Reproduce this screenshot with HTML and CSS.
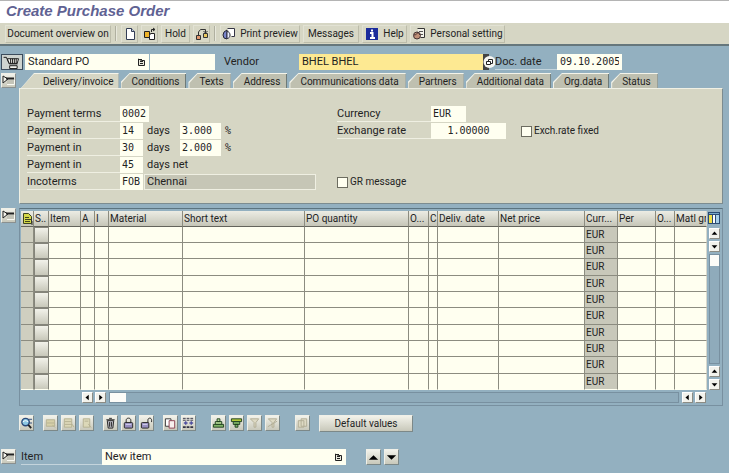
FILE: index.html
```html
<!DOCTYPE html>
<html lang="en">
<head>
<meta charset="utf-8">
<title>Create Purchase Order</title>
<link rel="stylesheet" href="styles.css">
</head>
<body>
<svg class="defs" aria-hidden="true">
  <symbol id="i-tray" viewBox="0 0 13 13"><path d="M1 2v7l5-4z" fill="#f4f4ec" stroke="#222"/><path d="M4 4.500h8" stroke="#222" stroke-width="2"/><path d="M5 6h7v4H5z" fill="#c4c4b8"/><path d="M5 10.500h7.500V6" stroke="#fafaf4" fill="none"/></symbol>
  <symbol id="i-list" viewBox="0 0 9 9"><path d="M1.500 1v6.500h6v-5h-3z" fill="#e8e8dc" stroke="#222"/><path d="M3 3.500h3M3 5.500h3" stroke="#222"/><path d="M1 1.500h4" stroke="#222"/></symbol>
  <symbol id="i-up" viewBox="0 0 11 11"><path d="M2 7l3.500-4L9 7z"/></symbol>
  <symbol id="i-down" viewBox="0 0 11 11"><path d="M2 4l3.500 4L9 4z"/></symbol>
  <symbol id="i-left" viewBox="0 0 11 11"><path d="M7 2L3 5.500 7 9z"/></symbol>
  <symbol id="i-right" viewBox="0 0 11 11"><path d="M4 2l4 3.500L4 9z"/></symbol>
</svg>

<header class="title"><h1>Create Purchase Order</h1></header>

<nav class="toolbar" aria-label="Application toolbar">
  <button class="tool doc">Document overview on</button>
  <span class="sep"></span>
  <button class="tool icon" aria-label="Create"><svg viewBox="0 0 14 14"><path d="M3.500 1.500h5l3 3v8h-8z" fill="#fff" stroke="#333d55"/><path d="M8.500 1.500v3h3" fill="#c8d4e4" stroke="#333d55"/></svg></button>
  <button class="tool icon" aria-label="Other purchase order"><svg viewBox="0 0 14 14"><path d="M1.500 4.500h5v6h-5z" fill="#f0b428" stroke="#222"/><path d="M7.500 6.500h4v6h-5v-4z" fill="#fff" stroke="#222"/><path d="M8.500 5V2.500h3M10 1l2 1.500L10 4" fill="none" stroke="#222"/></svg></button>
  <button class="tool hold">Hold</button>
  <button class="tool icon" aria-label="Check"><svg viewBox="0 0 14 14"><path d="M1.500 8.500h4v4h-4z" fill="#e09870" stroke="#333"/><path d="M8.500 6.500h4v4h-4z" fill="#e8c860" stroke="#333"/><path d="M3.500 8V5l2-2.500h5V6M8.500 4l2 2 2-2" fill="none" stroke="#333"/></svg></button>
  <span class="sep"></span>
  <button class="tool print"><svg viewBox="0 0 14 14"><path d="M5.500 1.500h7v8h-3" fill="#fff" stroke="#334"/><path d="M2 5l3-2v9l-3-1-1-3z" fill="#7a86cc" stroke="#223"/><path d="M5 4.500c4 0 4 7 0 7z" fill="#e8ecff" stroke="#334"/></svg>Print preview</button>
  <button class="tool msg">Messages</button>
  <button class="tool help"><svg viewBox="0 0 14 14"><rect x="1" y="1" width="12" height="12" fill="#1c2c9c"/><path d="M7 2.500v2M5 6h2.500v5M5 11h5" fill="none" stroke="#fff" stroke-width="2"/></svg>Help</button>
  <button class="tool personal"><svg viewBox="0 0 14 14"><path d="M5.500 1.500h7v9h-4" fill="#f4f4ec" stroke="#333"/><path d="M7 4.500h4M8 7.500h3" stroke="#555"/><circle cx="5" cy="8.500" r="3.500" fill="#c09078" stroke="#433"/><path d="M2 8c2 0 3-1 4-3l2 3" fill="none" stroke="#433"/></svg>Personal setting</button>
</nav>

<main>
  <form class="head">
    <button type="button" class="cart" aria-label="Shopping cart"><svg viewBox="0 0 20 15"><path d="M1 2.500h3l3 7h9" fill="none" stroke="#111"/><path d="M5 4h12l-1.500 5H7z" fill="#f4f4ee" stroke="#111"/><path d="M8.500 4v5M10.500 4v5M12.500 4v5M14.500 4v5" stroke="#111"/><path d="M7.500 11.500h8v3h-8z" fill="#f4f4ee" stroke="#111"/></svg></button>
    <span class="pick type"><select aria-label="Order type"><option>Standard PO</option></select><svg><use href="#i-list"/></svg></span>
    <input class="number" aria-label="Order number">
    <label class="vendor-label" for="vendor">Vendor</label>
    <input class="vendor" id="vendor" value="BHEL BHEL">
    <button type="button" class="match" aria-label="Search vendor"><svg viewBox="0 0 12 16"><path d="M0 0h6v16H0z" fill="#444"/><circle cx="6.500" cy="8" r="6" fill="#f6f6f2"/><path d="M5.500 5.500h4v4h-4z" fill="#fff" stroke="#222"/><path d="M3.500 7.500h4v3h-4z" fill="#fff" stroke="#222"/></svg></button>
    <label class="date-label" for="date">Doc. date</label>
    <input class="mono date" id="date" value="09.10.2005">
  </form>

  <section class="block">
    <button class="tray" aria-label="Collapse header"><svg><use href="#i-tray"/></svg></button>
    <div class="tabbed">
      <div class="tabs" role="tablist">
        <button class="tab active" role="tab" aria-selected="true"><span>Delivery/invoice</span></button>
        <button class="tab" role="tab"><span>Conditions</span></button>
        <button class="tab" role="tab"><span>Texts</span></button>
        <button class="tab" role="tab"><span>Address</span></button>
        <button class="tab" role="tab"><span>Communications data</span></button>
        <button class="tab" role="tab"><span>Partners</span></button>
        <button class="tab" role="tab"><span>Additional data</span></button>
        <button class="tab" role="tab"><span>Org.data</span></button>
        <button class="tab" role="tab"><span>Status</span></button>
      </div>
      <form class="panel">
        <div class="fields left">
          <div class="row"><label class="name" for="terms">Payment terms</label><input class="mono w4" id="terms" value="0002"></div>
          <div class="row"><label class="name" for="d1">Payment in</label><input class="mono w2" id="d1" value="14"><label class="unit" for="p1">days</label><input class="mono w5" id="p1" value="3.000"><span class="mono">%</span></div>
          <div class="row"><label class="name" for="d2">Payment in</label><input class="mono w2" id="d2" value="30"><label class="unit" for="p2">days</label><input class="mono w5" id="p2" value="2.000"><span class="mono">%</span></div>
          <div class="row"><label class="name" for="d3">Payment in</label><input class="mono w2" id="d3" value="45"><span class="unit">days net</span></div>
          <div class="row"><label class="name" for="inco">Incoterms</label><input class="mono w2" id="inco" value="FOB"><input class="place" aria-label="Incoterms place" value="Chennai" readonly></div>
        </div>
        <div class="fields right">
          <div class="row"><label class="name" for="cur">Currency</label><input class="mono w6" id="cur" value="EUR"></div>
          <div class="row"><label class="name" for="rate">Exchange rate</label><input class="mono rate" id="rate" value="1.00000"><label class="check fixed"><input type="checkbox">Exch.rate fixed</label></div>
          <div class="row"></div>
          <div class="row"></div>
          <div class="row"><label class="check"><input type="checkbox">GR message</label></div>
        </div>
      </form>
    </div>
  </section>

  <section class="block items">
    <button class="tray" aria-label="Collapse items"><svg><use href="#i-tray"/></svg></button>
    <div class="frame">
      <div class="body">
        <table>
          <colgroup><col class="c-mark"><col class="c-s"><col class="c-item"><col class="c-flag"><col class="c-flag"><col class="c-mat"><col class="c-text"><col class="c-qty"><col class="c-o"><col class="c-c"><col class="c-date"><col><col class="c-cur"><col class="c-per"><col class="c-ou"><col class="c-grp"></colgroup>
          <thead><tr><th><svg class="detail" viewBox="0 0 11 13"><path d="M1.500 1.500h5l3 3v7h-8z" fill="#d4d848" stroke="#3c4420"/><path d="M3 5.500h4M3 7.500h5M3 9.500h5" stroke="#3c4420"/><path d="M8 7l2 2v4" stroke="#333" fill="none"/></svg></th><th>S..</th><th>Item</th><th>A</th><th>I</th><th>Material</th><th>Short text</th><th>PO quantity</th><th>O...</th><th>C</th><th>Deliv. date</th><th>Net price</th><th>Curr...</th><th>Per</th><th>O...</th><th>Matl gr</th></tr></thead>
          <tbody>
            <tr><td></td><td></td><td></td><td></td><td></td><td></td><td></td><td></td><td></td><td></td><td></td><td></td><td>EUR</td><td></td><td></td><td></td></tr>
            <tr><td></td><td></td><td></td><td></td><td></td><td></td><td></td><td></td><td></td><td></td><td></td><td></td><td>EUR</td><td></td><td></td><td></td></tr>
            <tr><td></td><td></td><td></td><td></td><td></td><td></td><td></td><td></td><td></td><td></td><td></td><td></td><td>EUR</td><td></td><td></td><td></td></tr>
            <tr><td></td><td></td><td></td><td></td><td></td><td></td><td></td><td></td><td></td><td></td><td></td><td></td><td>EUR</td><td></td><td></td><td></td></tr>
            <tr><td></td><td></td><td></td><td></td><td></td><td></td><td></td><td></td><td></td><td></td><td></td><td></td><td>EUR</td><td></td><td></td><td></td></tr>
            <tr><td></td><td></td><td></td><td></td><td></td><td></td><td></td><td></td><td></td><td></td><td></td><td></td><td>EUR</td><td></td><td></td><td></td></tr>
            <tr><td></td><td></td><td></td><td></td><td></td><td></td><td></td><td></td><td></td><td></td><td></td><td></td><td>EUR</td><td></td><td></td><td></td></tr>
            <tr><td></td><td></td><td></td><td></td><td></td><td></td><td></td><td></td><td></td><td></td><td></td><td></td><td>EUR</td><td></td><td></td><td></td></tr>
            <tr><td></td><td></td><td></td><td></td><td></td><td></td><td></td><td></td><td></td><td></td><td></td><td></td><td>EUR</td><td></td><td></td><td></td></tr>
            <tr><td></td><td></td><td></td><td></td><td></td><td></td><td></td><td></td><td></td><td></td><td></td><td></td><td>EUR</td><td></td><td></td><td></td></tr>
          </tbody>
        </table>
        <div class="vscroll">
          <button class="config" aria-label="Table settings"><svg viewBox="0 0 14 14"><rect x="1" y="1" width="12" height="12" fill="#2c4c74"/><rect x="2" y="4" width="3" height="8" fill="#f0e048"/><rect x="6" y="4" width="2" height="8" fill="#fff"/><rect x="9" y="4" width="3" height="8" fill="#a8d0e8"/><path d="M2 2.500h10" stroke="#78a8c8"/></svg></button>
          <button class="arrow" aria-label="Scroll up"><svg><use href="#i-up"/></svg></button>
          <button class="arrow" aria-label="Scroll down"><svg><use href="#i-down"/></svg></button>
          <span class="track"><span class="thumb"></span></span>
          <button class="arrow" aria-label="Page up"><svg><use href="#i-up"/></svg></button>
          <button class="arrow" aria-label="Page down"><svg><use href="#i-down"/></svg></button>
        </div>
      </div>
      <div class="hscroll">
        <button class="arrow" aria-label="Scroll left"><svg><use href="#i-left"/></svg></button>
        <button class="arrow" aria-label="Scroll right"><svg><use href="#i-right"/></svg></button>
        <span class="track"><span class="thumb"></span></span>
        <button class="arrow" aria-label="Page left"><svg><use href="#i-left"/></svg></button>
        <button class="arrow" aria-label="Page right"><svg><use href="#i-right"/></svg></button>
      </div>
    </div>
  </section>

  <div class="actions">
    <div class="group"><button class="act" aria-label="Details"><svg viewBox="0 0 14 14"><circle cx="6" cy="6" r="4" fill="#8cc8e4" stroke="#2a4878" stroke-width="1.500"/><path d="M9 9l3 3.500" stroke="#222" stroke-width="2"/><path d="M3 6c2-2 4-2 6 0" stroke="#fff" fill="none"/><path d="M9 3h4M9 7h4" stroke="#2a4878"/></svg></button></div>
    <div class="group">
      <button class="act" disabled aria-label="Insert item"><svg viewBox="0 0 14 14"><path d="M2.500 3.500h9v7h-9zM3 7h8M9 9l3 3" fill="#d6d0a8" stroke="#b4b092"/></svg></button>
      <button class="act" disabled aria-label="Append item"><svg viewBox="0 0 14 14"><path d="M2.500 2.500h8v9h-8zM3 5.500h7M3 8.500h8l2 3" fill="#dcd8b8" stroke="#b4b092"/></svg></button>
      <button class="act" disabled aria-label="Copy item"><svg viewBox="0 0 14 14"><path d="M3.500 2.500h7v9h-7zM5 5h4M9 8l3 4" fill="#dcd8b8" stroke="#b4b092"/></svg></button>
    </div>
    <div class="group">
      <button class="act" aria-label="Delete"><svg viewBox="0 0 14 14"><path d="M3.500 4.500h7l-1 8h-5z" fill="#b8b8c0" stroke="#222"/><path d="M2.500 3.500h9M5.500 2h3M6 6v5M8 6v5" stroke="#222"/></svg></button>
      <button class="act" aria-label="Lock"><svg viewBox="0 0 14 14"><path d="M4.500 7V4c0-3 5-3 5 0v3" fill="none" stroke="#222"/><rect x="2.500" y="6.500" width="9" height="6" rx="1" fill="#9890c0" stroke="#222"/><path d="M4 8.500h6" stroke="#d8d4f0"/></svg></button>
      <button class="act" aria-label="Unlock"><svg viewBox="0 0 14 14"><path d="M8.500 7V4c0-3 4-3 4 0v2" fill="none" stroke="#222"/><rect x="1.500" y="6.500" width="8" height="6" rx="1" fill="#9890c0" stroke="#222"/><path d="M3 8.500h5" stroke="#d8d4f0"/></svg></button>
    </div>
    <div class="group far">
      <button class="act" aria-label="Duplicate"><svg viewBox="0 0 14 14"><path d="M1.500 2.500h6v8h-6z" fill="#fff" stroke="#333"/><path d="M5.500 4.500h6v8h-6z" fill="#f8f0ee" stroke="#8c4050"/></svg></button>
      <button class="act" aria-label="Fast change"><svg viewBox="0 0 14 14"><path d="M1 2h12M1 4h12" stroke="#334" stroke-dasharray="3 1"/><path d="M4 5v4M10 5v4M2 7h4M8 7h4" stroke="#5050a0" stroke-width="1.500"/><path d="M1 11.500h12" stroke="#334" stroke-width="2" stroke-dasharray="3 1"/></svg></button>
    </div>
    <div class="group far">
      <button class="act" aria-label="Sort ascending"><svg viewBox="0 0 14 14"><path d="M5.500 2.500h3v3h-3zM3.500 5.500h7v3h-7z" fill="#b8dc98" stroke="#1c3c1c"/><path d="M1.500 8.500h11v3h-11z" fill="#80b468" stroke="#1c3c1c"/></svg></button>
      <button class="act" aria-label="Sort descending"><svg viewBox="0 0 14 14"><path d="M1.500 2.500h11v3h-11z" fill="#b0c838" stroke="#1c3c1c"/><path d="M3.500 5.500h7v3h-7zM5.500 8.500h3v3h-3z" fill="#80b468" stroke="#1c3c1c"/></svg></button>
      <button class="act" disabled aria-label="Set filter"><svg viewBox="0 0 14 14"><path d="M2.500 2.500h9l-3 4v5h-2v-5z" fill="#dedac4" stroke="#b0ac94"/></svg></button>
      <button class="act" disabled aria-label="Delete filter"><svg viewBox="0 0 14 14"><path d="M2.500 2.500h9l-3 4v5h-2v-5zM2 11l10-6" fill="#dedac4" stroke="#b0ac94"/></svg></button>
    </div>
    <div class="group"><button class="act" disabled aria-label="Paste"><svg viewBox="0 0 14 14"><path d="M2.500 4.500h6v7h-6zM5.500 2.500h6v8h-6z" fill="#dedac4" stroke="#b0ac94"/></svg></button></div>
    <button class="default">Default values</button>
  </div>

  <form class="item-bar">
    <button type="button" class="tray" aria-label="Expand item detail"><svg><use href="#i-tray"/></svg></button>
    <label class="item-label" for="item">Item</label>
    <span class="pick item"><select id="item"><option>New item</option></select><svg><use href="#i-list"/></svg></span>
    <button type="button" class="act" aria-label="Previous item"><svg viewBox="0 0 14 14"><path d="M2 10l5-5 5 5z"/></svg></button>
    <button type="button" class="act" aria-label="Next item"><svg viewBox="0 0 14 14"><path d="M2 5l5 5 5-5z"/></svg></button>
  </form>
</main>
</body>
</html>
```
FILE: styles.css
```css
:root {
  --blue: #93b0c0;
  --sand: #d6d6c4;
  --ink: #23231f;
  --cell: #fffff0;
  --bevel: linear-gradient(#f2f2ea, #c8c8ba);
}

* { box-sizing: border-box; }

body {
  margin: 0;
  background: var(--blue);
  color: var(--ink);
  font: 11px/16px Roboto, "Liberation Sans", sans-serif;
}

button, input, select {
  margin: 0;
  padding: 0;
  border: 0;
  border-radius: 0;
  color: inherit;
  font: inherit;
}

input, select {
  height: 16px;
  padding: 0 3px;
  background: var(--cell);
  appearance: none;
  min-width: 0;
}

button { flex: none; white-space: nowrap; }
svg { display: block; flex: none; }
.defs { position: absolute; width: 0; height: 0; }
.mono { font: 10px/16px "DejaVu Sans Mono", "Liberation Mono", monospace; }

/* Title and toolbar */
.title {
  height: 23px;
  padding: 0 6px;
  border-top: 1px solid #b4b4b4;
  background: #fff;
}

.title h1 {
  margin: 0;
  color: #5f6293;
  font: italic bold 15px/20px "Liberation Sans", sans-serif;
}

.toolbar {
  display: flex;
  align-items: center;
  gap: 3px;
  height: 23px;
  padding: 0 5px;
  border-bottom: 2px solid #66777c;
  background: var(--sand);
  font-size: 10px;
}

.tool {
  display: flex;
  align-items: center;
  justify-content: center;
  gap: 4px;
  height: 18px;
  border: 1px solid;
  border-color: #e2e2d4 #bcbcaa #bcbcaa #e2e2d4;
  background: #d8d8c6;
}

.tool svg { width: 14px; height: 14px; }
.doc { width: 106px; }
.icon { width: 17px; }
.hold { width: 29px; }
.print { width: 80px; }
.msg { width: 56px; }
.help { width: 45px; }
.personal { width: 95px; }

.sep {
  width: 2px;
  height: 15px;
  margin: 0 1px;
  border-left: 1px solid #b0b0a0;
  border-right: 1px solid #e8e8dc;
}

/* Document header */
.head {
  display: flex;
  height: 16px;
  margin-top: 8px;
}

.cart {
  width: 22px;
  margin: 0 2px 0 1px;
  border: 1px solid #3c4c5c;
  background: #cfd4d0;
}

.cart svg { width: 20px; height: 14px; }
.pick { position: relative; display: flex; }
.pick select { width: 100%; }
.pick svg { position: absolute; right: 3px; top: 4px; width: 9px; height: 9px; pointer-events: none; }
.type { width: 124px; }
.number { width: 65px; margin-left: 1px; }

.vendor-label, .date-label, .item-label, .name {
  flex: none;
  height: 16px;
  border-bottom: 1px solid #c4d4dc;
}

.vendor-label { width: 75px; margin-left: 9px; border-color: transparent; }
.vendor { width: 184px; background: #fde992; }
.match { width: 12px; background: none; }
.match svg { width: 12px; height: 16px; }
.date-label { width: 62px; }
.date { width: 65px; }

/* Tab strip */
.block {
  display: grid;
  grid-template-columns: 19px 1fr;
  align-items: start;
  padding-right: 6px;
  margin-top: 3px;
}

.tray {
  width: 15px;
  height: 15px;
  margin-left: 1px;
  border: 1px solid;
  border-color: #f0f0e8 #8a9090 #8a9090 #f0f0e8;
  background: var(--bevel);
}

.tray svg { width: 13px; height: 13px; }
.tabs { display: flex; height: 15px; font-size: 10px; }

.tab {
  height: 15px;
  padding: 1px 0 0;
  margin-right: 2px;
  background: #f4f4ea;
  clip-path: polygon(9px 0, 100% 0, 100% 100%, 0 100%, 0 9px);
}

.tab span {
  display: block;
  height: 14px;
  padding: 0 6px 0 11px;
  border-right: 1px solid #6e7a78;
  background: #bfc0b0;
  line-height: 15px;
  clip-path: polygon(9px 0, 100% 0, 100% 100%, 1px 100%, 1px 9px);
}

.tab.active { clip-path: polygon(15px 0, 100% 0, 100% 100%, 2px 100%); }

.tab.active span {
  padding: 0 4px 0 24px;
  background: var(--sand);
  clip-path: polygon(15px 0, 100% 0, 100% 100%, 2px 100%);
}

.panel {
  display: flex;
  gap: 21px;
  height: 116px;
  padding: 17px 7px 0;
  border: 1px solid;
  border-color: #f0f0e4 #7c8c90 #7c8c90 #f0f0e4;
  background: var(--sand);
}

.fields { display: grid; grid-auto-rows: 16px; gap: 1px; align-content: start; }
.left { width: 289px; }
.right { flex: 1; }
.row { display: flex; }
.name { width: 93px; border-color: #efefe2; }
.right .name { width: 94px; }
.row .mono { padding: 0 2px; }
.w4 { width: 29px; }
.w2 { width: 23px; }
.w5 { width: 41px; }
.w6 { width: 35px; }
.rate { width: 75px; text-align: center; }
.row .unit { width: 33px; margin-left: 4px; white-space: nowrap; }
.row span.mono { margin-left: 2px; }

.place {
  flex: 1;
  margin-left: 1px;
  padding: 0 2px;
  border: 1px solid #efefe2;
  background: #c6c6b6;
}

.check { display: flex; align-items: center; gap: 2px; font-size: 10px; white-space: nowrap; }
.check.fixed { margin-left: 15px; }

.check input {
  width: 11px;
  height: 11px;
  padding: 0;
  border: 1px solid #6c6c60;
}

/* Items grid */
.items { margin-top: 4px; }

.frame {
  border: 1px solid #7890a0;
  border-top-color: #5c7480;
  padding: 2px 1px;
  font-size: 10px;
}

.body { display: flex; }

table {
  flex: 1;
  width: 0;
  table-layout: fixed;
  border-collapse: separate;
  border-spacing: 0;
}

.c-mark { width: 13px; }
.c-s { width: 15px; }
.c-item { width: 32px; }
.c-flag { width: 14px; }
.c-mat { width: 74px; }
.c-text { width: 122px; }
.c-qty { width: 104px; }
.c-o { width: 20px; }
.c-c { width: 9px; }
.c-date { width: 61px; }
.c-cur { width: 33px; }
.c-per { width: 38px; }
.c-ou { width: 19px; }
.c-grp { width: 32px; }

th, td {
  height: 16px;
  padding: 0 0 0 1px;
  border-right: 1px solid #8c8c80;
  border-bottom: 1px solid #8c8c80;
  background: var(--cell);
  font-weight: normal;
  line-height: 14px;
  text-align: left;
  white-space: nowrap;
  overflow: hidden;
}

th { background: linear-gradient(#ecece4, #c6c6b8); border-bottom-color: #64645c; }
tbody tr:nth-child(3n) td { height: 17px; }
tbody tr:last-child td { border-bottom-color: var(--cell); }
td:first-child { background: #cfcfc0; }
td:nth-child(2) { background: var(--bevel); border: 1px solid #84847a; }
tbody td:nth-child(13) { background: #c8c8ba; }
th:last-child, td:last-child { border-right-color: #d8d8cc; }
.detail { width: 11px; height: 13px; }

.vscroll {
  display: flex;
  flex-direction: column;
  align-items: center;
  gap: 2px;
  width: 14px;
}

.config { background: none; margin-bottom: 1px; }
.config svg { width: 14px; height: 14px; }

.arrow {
  width: 11px;
  height: 11px;
  border: 1px solid;
  border-color: #fff #8c8c84 #8c8c84 #fff;
  background: #f2f2ec;
}

.arrow svg { width: 9px; height: 9px; }

.track {
  display: flex;
  flex: 1;
  border: 1px solid #7890a0;
  background: #8fabbb;
}

.vscroll .track { width: 11px; }
.thumb { background: #fcfcf8; }
.vscroll .thumb { width: 100%; height: 11px; }

.hscroll {
  display: flex;
  gap: 2px;
  padding: 2px 15px 0 61px;
}

.hscroll .track { height: 11px; margin: 0 1px; }
.hscroll .thumb { width: 16px; }

/* Item actions */
.actions {
  display: flex;
  height: 17px;
  margin: 9px 0 0 19px;
}

.group { display: flex; gap: 3px; margin-right: 9px; }
.group.far { margin-right: 15px; }

.act, .default {
  border: 1px solid;
  border-color: #f0f0e8 #7c8888 #7c8888 #f0f0e8;
  background: var(--bevel);
}

.act { width: 15px; height: 16px; }
.act svg { width: 13px; height: 14px; }
.default { width: 94px; height: 17px; font-size: 10px; line-height: 15px; }

.item-bar {
  display: flex;
  margin-top: 17px;
}

.item-label { width: 81px; margin-left: 5px; }
.item { width: 244px; margin-right: 20px; }
.item-bar .act + .act { margin-left: 3px; }
```
